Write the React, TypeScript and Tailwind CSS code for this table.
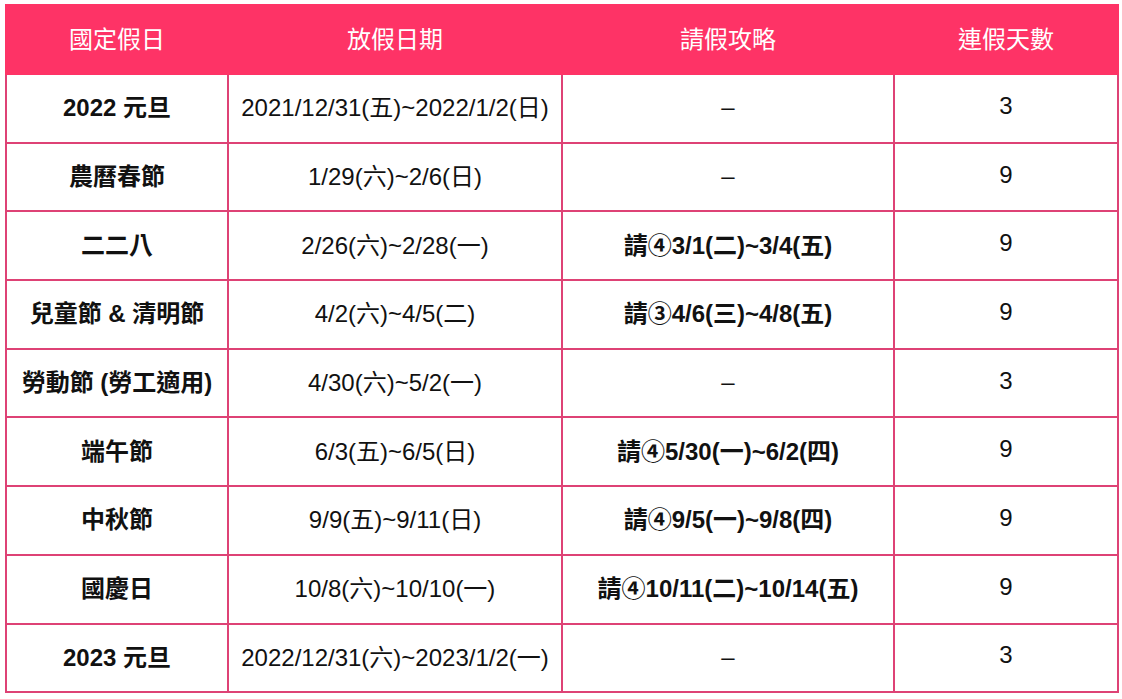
import React from "react";

const rows: [string, string, string, string][] = [
  ["2022 元旦", "2021/12/31(五)~2022/1/2(日)", "–", "3"],
  ["農曆春節", "1/29(六)~2/6(日)", "–", "9"],
  ["二二八", "2/26(六)~2/28(一)", "請④3/1(二)~3/4(五)", "9"],
  ["兒童節 & 清明節", "4/2(六)~4/5(二)", "請③4/6(三)~4/8(五)", "9"],
  ["勞動節 (勞工適用)", "4/30(六)~5/2(一)", "–", "3"],
  ["端午節", "6/3(五)~6/5(日)", "請④5/30(一)~6/2(四)", "9"],
  ["中秋節", "9/9(五)~9/11(日)", "請④9/5(一)~9/8(四)", "9"],
  ["國慶日", "10/8(六)~10/10(一)", "請④10/11(二)~10/14(五)", "9"],
  ["2023 元旦", "2022/12/31(六)~2023/1/2(一)", "–", "3"],
];

const font = "[font-family:'Liberation_Sans','Noto_Sans_CJK_TC',sans-serif]";

export default function App() {
  return (
    <div className={`bg-white w-[1122px] h-[699px] pt-[4px] pl-[5px] ${font}`}>
      <table className="table-fixed border-collapse w-[1112px] text-[24px] text-[#111]">
        <colgroup>
          <col className="w-[222px]" />
          <col className="w-[334px]" />
          <col className="w-[332px]" />
          <col className="w-[224px]" />
        </colgroup>
        <thead>
          <tr className="h-[69px] bg-[#fe3366] text-white">
            {["國定假日", "放假日期", "請假攻略", "連假天數"].map((h) => (
              <th key={h} className="font-normal text-center border-2 border-[#fe3366] p-0">
                {h}
              </th>
            ))}
          </tr>
        </thead>
        <tbody>
          {rows.map((r, i) => (
            <tr key={i} className="h-[68.7px]">
              <td className="border-2 border-[#de4275] text-center font-bold p-0">{r[0]}</td>
              <td className="border-2 border-[#de4275] text-center p-0">{r[1]}</td>
              <td
                className={`border-2 border-[#de4275] text-center p-0 ${
                  r[2] === "–" ? "font-normal pb-[2px]" : "font-bold"
                }`}
              >
                {r[2]}
              </td>
              <td className="border-2 border-[#de4275] text-center p-0 pb-[5px]">{r[3]}</td>
            </tr>
          ))}
        </tbody>
      </table>
    </div>
  );
}
